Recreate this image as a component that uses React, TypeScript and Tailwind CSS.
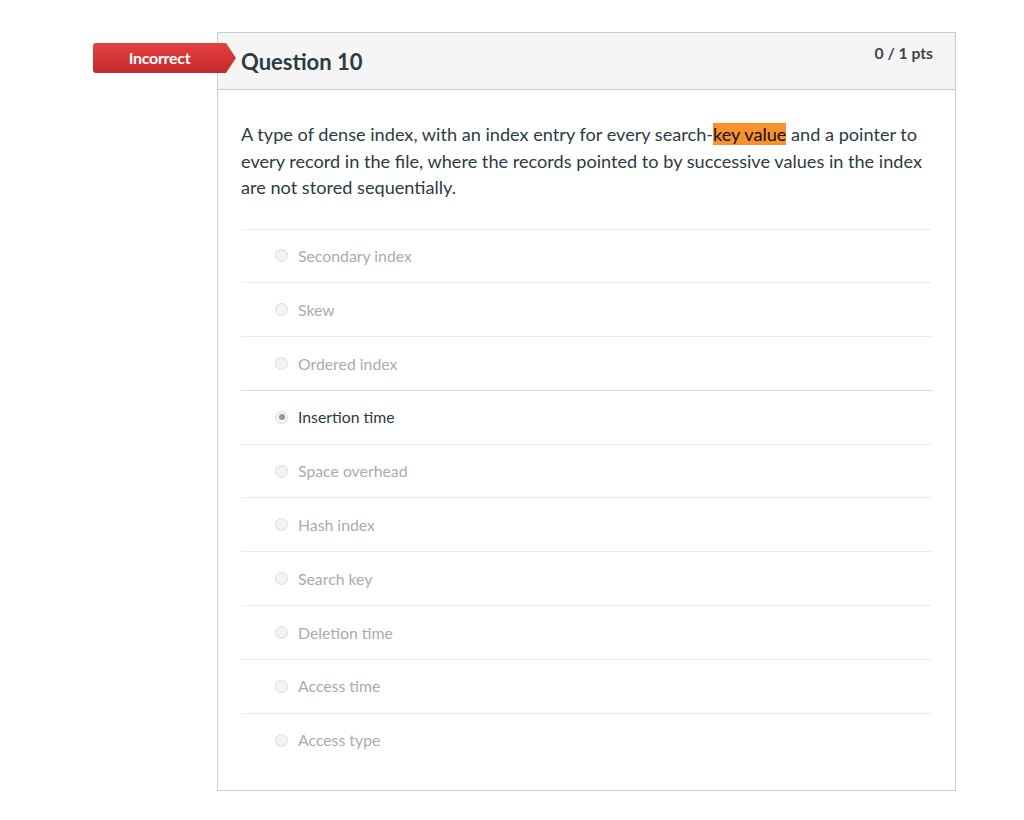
import React from "react";

const answers = [
  "Secondary index",
  "Skew",
  "Ordered index",
  "Insertion time",
  "Space overhead",
  "Hash index",
  "Search key",
  "Deletion time",
  "Access time",
  "Access type",
];

function Radio({ checked }: { checked: boolean }) {
  return (
    <span className="flex h-[13px] w-[13px] items-center justify-center rounded-full border border-[#dcdcdc] bg-[#f3f3f3]">
      {checked && <span className="h-[6px] w-[6px] rounded-full bg-[#9a9a9a]" />}
    </span>
  );
}

export default function App() {
  return (
    <div className="min-h-[820px] bg-white pt-[32px] font-['Lato',sans-serif]">
      <div className="relative ml-[217px] w-[739px] border border-[#c7cdd1] bg-white">
        <div className="absolute left-[-125px] top-[10px] flex h-[30px] w-[143px] items-center rounded-l-[3px] bg-gradient-to-b from-[#e5403f] to-[#c42a2a] pr-[10px] [clip-path:polygon(0_0,133px_0,143px_15px,133px_30px,0_30px)]">
          <span className="w-full text-center text-[16px] font-bold tracking-[-0.3px] text-white">
            Incorrect
          </span>
        </div>
        <div className="flex h-[57px] items-start justify-between border-b border-[#c7cdd1] bg-[#f5f5f5] pl-[23px] pr-[22px]">
          <h2 className="pt-[15px] text-[22px] font-bold leading-[28px] text-[#2d3b45]">
            Question 10
          </h2>
          <span className="pt-[10px] text-[15.7px] font-bold leading-[20px] text-[#3d454c]">
            0 / 1 pts
          </span>
        </div>
        <div className="px-[23px] pb-[24px] pt-[31px]">
          <p className="text-[18.15px] leading-[26.5px] text-[#2d3b45]">
            A type of dense index, with an index entry for every search-
            <span className="bg-[#f7922e] text-[#111]">key value</span> and a pointer to every record
            in the file, where the records pointed to by successive values in the index are not stored
            sequentially.
          </p>
          <div className="mt-[28px]">
            {answers.map((a) => {
              const sel = a === "Insertion time";
              return (
                <div
                  key={a}
                  className={`flex h-[53.8px] items-center border-t ${
                    sel ? "border-[#dadada]" : "border-[#ececec]"
                  }`}
                >
                  <div className="flex w-[57px] justify-end pr-[10px]">
                    <Radio checked={sel} />
                  </div>
                  <span
                    className={`text-[15.8px] ${sel ? "text-[#2d3b45]" : "text-[#a7acb0]"}`}
                  >
                    {a}
                  </span>
                </div>
              );
            })}
          </div>
        </div>
      </div>
    </div>
  );
}
